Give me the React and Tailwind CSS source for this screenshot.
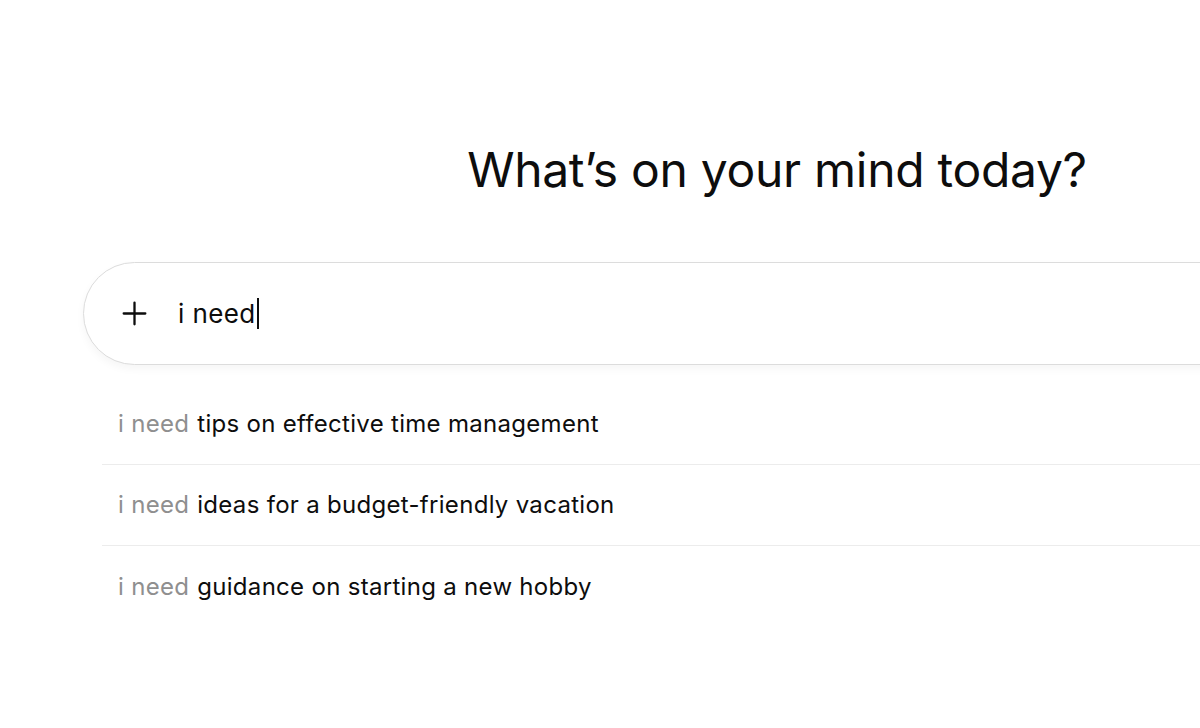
import { Plus } from "lucide-react";

const suggestions = [
  "tips on effective time management",
  "ideas for a budget-friendly vacation",
  "guidance on starting a new hobby",
];

export default function App() {
  return (
    <div className="h-[728px] w-[1200px] overflow-hidden bg-white font-['Inter',sans-serif] text-[#0d0d0d]">
      <div className="ml-[83px] w-[1388px] pt-[138px]">
        {/* Title */}
        <h1 className="text-center text-[48px] leading-[64px] font-normal tracking-[-0.3px]">
          What’s on your mind today?
        </h1>

        {/* Composer */}
        <div className="mt-[60px] flex h-[103px] items-center rounded-full border border-[#dcdcdc] bg-white pl-[32px] shadow-[0_4px_8px_rgba(0,0,0,0.04)]">
          <Plus size={37} strokeWidth={1.5} className="text-[#0d0d0d]" />
          <div className="ml-[25px] flex items-center text-[26px] tracking-[0.4px]">
            <span>i need</span>
            <span className="ml-[1px] h-[31px] w-[2px] bg-[#0d0d0d]" />
          </div>
        </div>

        {/* Suggestions */}
        <ul className="mt-[19px] ml-[19px]">
          {suggestions.map((s, i) => (
            <li
              key={s}
              className={`flex h-[81px] items-center px-[16px] text-[24px] tracking-[0.3px] ${
                i < suggestions.length - 1 ? "border-b border-[#ececec]" : ""
              }`}
            >
              <span className="text-[#8f8f8f]">i need</span>
              <span className="ml-[8px]">{s}</span>
            </li>
          ))}
        </ul>
      </div>
    </div>
  );
}
